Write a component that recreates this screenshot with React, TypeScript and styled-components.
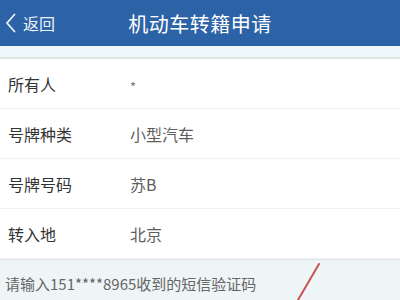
import React from "react";
import styled, { createGlobalStyle } from "styled-components";

const Global = createGlobalStyle`
  html, body { margin: 0; padding: 0; background: #ffffff; }
  body { font-family: "Noto Sans CJK SC", "Noto Sans", sans-serif; }
`;

const Page = styled.div`
  position: relative;
  width: 400px;
  height: 300px;
  overflow: hidden;
  background: #ffffff;
  display: flex;
  flex-direction: column;
`;

const Header = styled.header`
  height: 46px;
  background: #2c62a6;
  display: flex;
  align-items: center;
  position: relative;
  color: #ffffff;
  flex-shrink: 0;
`;

const Back = styled.div`
  display: flex;
  align-items: center;
  gap: 7px;
  padding-left: 5px;
  font-size: 16px;
  color: #eef3fa;
  z-index: 1;
`;

const Title = styled.h1`
  position: absolute;
  left: 0;
  right: 0;
  margin: 0;
  text-align: center;
  font-size: 20px;
  font-weight: 400;
  letter-spacing: 0.5px;
  color: #ffffff;
`;

const Band = styled.div`
  height: 11px;
  background: #eef7f9;
  border-bottom: 2px solid #e2e4e4;
  flex-shrink: 0;
`;

const List = styled.div`
  display: flex;
  flex-direction: column;
`;

const Row = styled.div`
  height: 49px;
  display: flex;
  align-items: center;
  border-bottom: 1px solid #f2f2f2;
  font-size: 16px;
`;

const Label = styled.span`
  width: 122px;
  padding-left: 8px;
  color: #333333;
`;

const Value = styled.span<{ $star?: boolean }>`
  font-size: ${(p) => (p.$star ? "13px" : "16px")};
  margin-top: ${(p) => (p.$star ? "6px" : "0")};
  color: ${(p) => (p.$star ? "#777777" : "#5e5e5e")};
`;

const Notice = styled.div`
  flex: 1;
  background: #eef5f7;
  border-top: 1px solid #dde2e3;
  padding: 13px 0 0 5px;
  font-size: 15px;
  color: #666666;
`;

const Mark = styled.svg`
  position: absolute;
  left: 290px;
  top: 260px;
`;

const rows: { label: string; value: string; star?: boolean }[] = [
  { label: "所有人", value: "*", star: true },
  { label: "号牌种类", value: "小型汽车" },
  { label: "号牌号码", value: "苏B" },
  { label: "转入地", value: "北京" },
];

export default function App() {
  return (
    <Page>
      <Global />
      <Header>
        <Back>
          <svg width="11" height="20" viewBox="0 0 11 20">
            <path d="M9.5 1.5 L2 10 L9.5 18.5" fill="none" stroke="#eef3fa" strokeWidth="1.8" strokeLinecap="round" strokeLinejoin="round" />
          </svg>
          <span>返回</span>
        </Back>
        <Title>机动车转籍申请</Title>
      </Header>
      <Band />
      <List>
        {rows.map((r) => (
          <Row key={r.label}>
            <Label>{r.label}</Label>
            <Value $star={r.star}>{r.value}</Value>
          </Row>
        ))}
      </List>
      <Notice>请输入151****8965收到的短信验证码</Notice>
      <Mark width="40" height="40" viewBox="0 0 40 40">
        <path d="M29 4 L8 40" stroke="#c8343a" strokeWidth="2" strokeLinecap="round" opacity="0.85" />
      </Mark>
    </Page>
  );
}
